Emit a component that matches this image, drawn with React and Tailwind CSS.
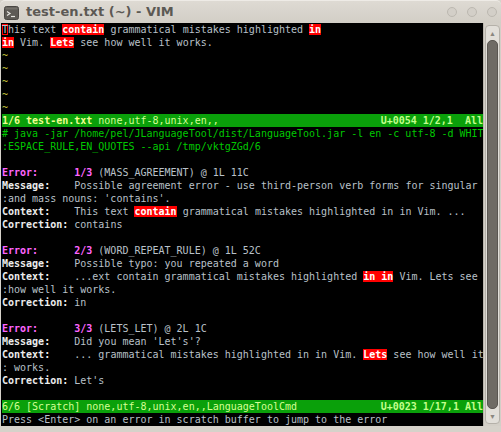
const mono = { fontFamily: '"DejaVu Sans Mono", "Liberation Mono", monospace' };

function Hl({ children }) {
  return <span className="bg-[#ff0000] text-white font-bold">{children}</span>;
}

function Line({ children, className = '' }) {
  return <div className={`h-[13px] leading-[13px] whitespace-pre ${className}`}>{children}</div>;
}

function Label({ children }) {
  return <span className="font-bold text-[#ececec]">{children}</span>;
}

function ErrorHead({ n, rest }) {
  return (
    <Line>
      <span className="font-bold text-[#ff66ff]">{'Error:      '}{n}</span>
      {rest}
    </Line>
  );
}

function Status({ left, right }) {
  return (
    <div className="h-[13px] leading-[13px] whitespace-pre flex justify-between bg-[#0aa00a] text-[#d4ff94]">
      <span>{left}</span>
      <span className="font-bold text-[#c2ff8c]">{right}</span>
    </div>
  );
}

function TermIcon() {
  return (
    <svg width="15" height="14" viewBox="0 0 15 14">
      <rect x="0.5" y="0.5" width="14" height="13" rx="2" fill="#5d5a55" stroke="#4a4743" />
      <rect x="1.5" y="1.5" width="12" height="2" fill="#76726c" />
      <path d="M3 5.5 L6 7.5 L3 9.5" stroke="#e8e6e2" strokeWidth="1.2" fill="none" />
      <path d="M7 10.5 H11" stroke="#e8e6e2" strokeWidth="1.2" />
    </svg>
  );
}

function Scrollbar() {
  return (
    <div className="w-[18px] flex flex-col items-center bg-[#d3cfc7] border-l border-[#bab6ae] pt-[2px] pb-[2px]">
      <div className="w-[15px] flex-1 flex flex-col rounded-[4px] bg-[#e2dfd9] border border-[#b5b1a9] overflow-hidden">
        <div className="h-[14px] flex items-center justify-center text-[#8a867f] text-[7px] leading-none">▲</div>
        <div className="flex-1 mx-[1px] rounded-[5px] bg-[#6f6b65] border border-[#5a5651]" />
        <div className="h-[14px] flex items-center justify-center text-[#8a867f] text-[7px] leading-none">▼</div>
      </div>
    </div>
  );
}

export default function App() {
  return (
    <div className="w-[501px] h-[432px] bg-[#d6d2ca] flex flex-col overflow-hidden">
      <div className="h-[23px] flex items-center rounded-t-[5px] bg-gradient-to-b from-[#dedad3] to-[#d2cec6] border-t border-[#eeebe6]">
        <div className="ml-[4px] mt-[1px] flex items-center">
          <TermIcon />
        </div>
        <span
          className="ml-[7px] text-[13px] font-bold text-[#5c5954]"
          style={{ fontFamily: '"DejaVu Sans", "Liberation Sans", sans-serif' }}
        >
          test-en.txt (~) - VIM
        </span>
        <div className="ml-auto mr-[4px] flex gap-[10px]">
          <div className="w-[10px] h-[10px] rounded-full border border-[#bcb8b0] bg-[#d3cfc8]" />
          <div className="w-[10px] h-[10px] rounded-full border border-[#bcb8b0] bg-[#d3cfc8]" />
          <div className="w-[10px] h-[10px] rounded-full border border-[#bcb8b0] bg-[#d3cfc8]" />
        </div>
      </div>

      <div className="flex h-[403px] ml-[1px]">
        <div className="w-[482px] bg-black text-[10px] text-[#b9c1c9] pl-px" style={mono}>
          <Line>
            <span className="shadow-[inset_0_0_0_1px_#ff0000]">T</span>
            {'his text '}<Hl>contain</Hl>{' grammatical mistakes highlighted '}<Hl>in</Hl>
          </Line>
          <Line><Hl>in</Hl>{' Vim. '}<Hl>Lets</Hl>{' see how well it works.'}</Line>
          {[0, 1, 2, 3, 4].map((i) => (
            <Line key={i} className="text-[#c4c43c]">~</Line>
          ))}
          <Status
            left={<><span className="font-bold text-[#f0ff90]">1/6 test-en.txt</span>{' none,utf-8,unix,en,,'}</>}
            right="U+0054 1/2,1  All"
          />
          <Line className="text-[#00c800]"># java -jar /home/pel/JLanguageTool/dist/LanguageTool.jar -l en -c utf-8 -d WHIT</Line>
          <Line className="text-[#00c800]">:ESPACE_RULE,EN_QUOTES --api /tmp/vktgZGd/6</Line>
          <Line />
          <ErrorHead n="1/3" rest=" (MASS_AGREEMENT) @ 1L 11C" />
          <Line><Label>Message:</Label>{'    Possible agreement error - use third-person verb forms for singular'}</Line>
          <Line>:and mass nouns: 'contains'.</Line>
          <Line><Label>Context:</Label>{'    This text '}<Hl>contain</Hl>{' grammatical mistakes highlighted in in Vim. ...'}</Line>
          <Line><Label>Correction:</Label>{' contains'}</Line>
          <Line />
          <ErrorHead n="2/3" rest=" (WORD_REPEAT_RULE) @ 1L 52C" />
          <Line><Label>Message:</Label>{'    Possible typo: you repeated a word'}</Line>
          <Line><Label>Context:</Label>{'    ...ext contain grammatical mistakes highlighted '}<Hl>in in</Hl>{' Vim. Lets see'}</Line>
          <Line>:how well it works.</Line>
          <Line><Label>Correction:</Label>{' in'}</Line>
          <Line />
          <ErrorHead n="3/3" rest=" (LETS_LET) @ 2L 1C" />
          <Line><Label>Message:</Label>{"    Did you mean 'Let's'?"}</Line>
          <Line><Label>Context:</Label>{'    ... grammatical mistakes highlighted in in Vim. '}<Hl>Lets</Hl>{' see how well it'}</Line>
          <Line>: works.</Line>
          <Line><Label>Correction:</Label>{" Let's"}</Line>
          <Line />
          <Status left="6/6 [Scratch] none,utf-8,unix,en,,LanguageToolCmd" right="U+0023 1/17,1 All" />
          <Line>{'Press <Enter> on an error in scratch buffer to jump to the error'}</Line>
        </div>
        <Scrollbar />
      </div>
    </div>
  );
}
